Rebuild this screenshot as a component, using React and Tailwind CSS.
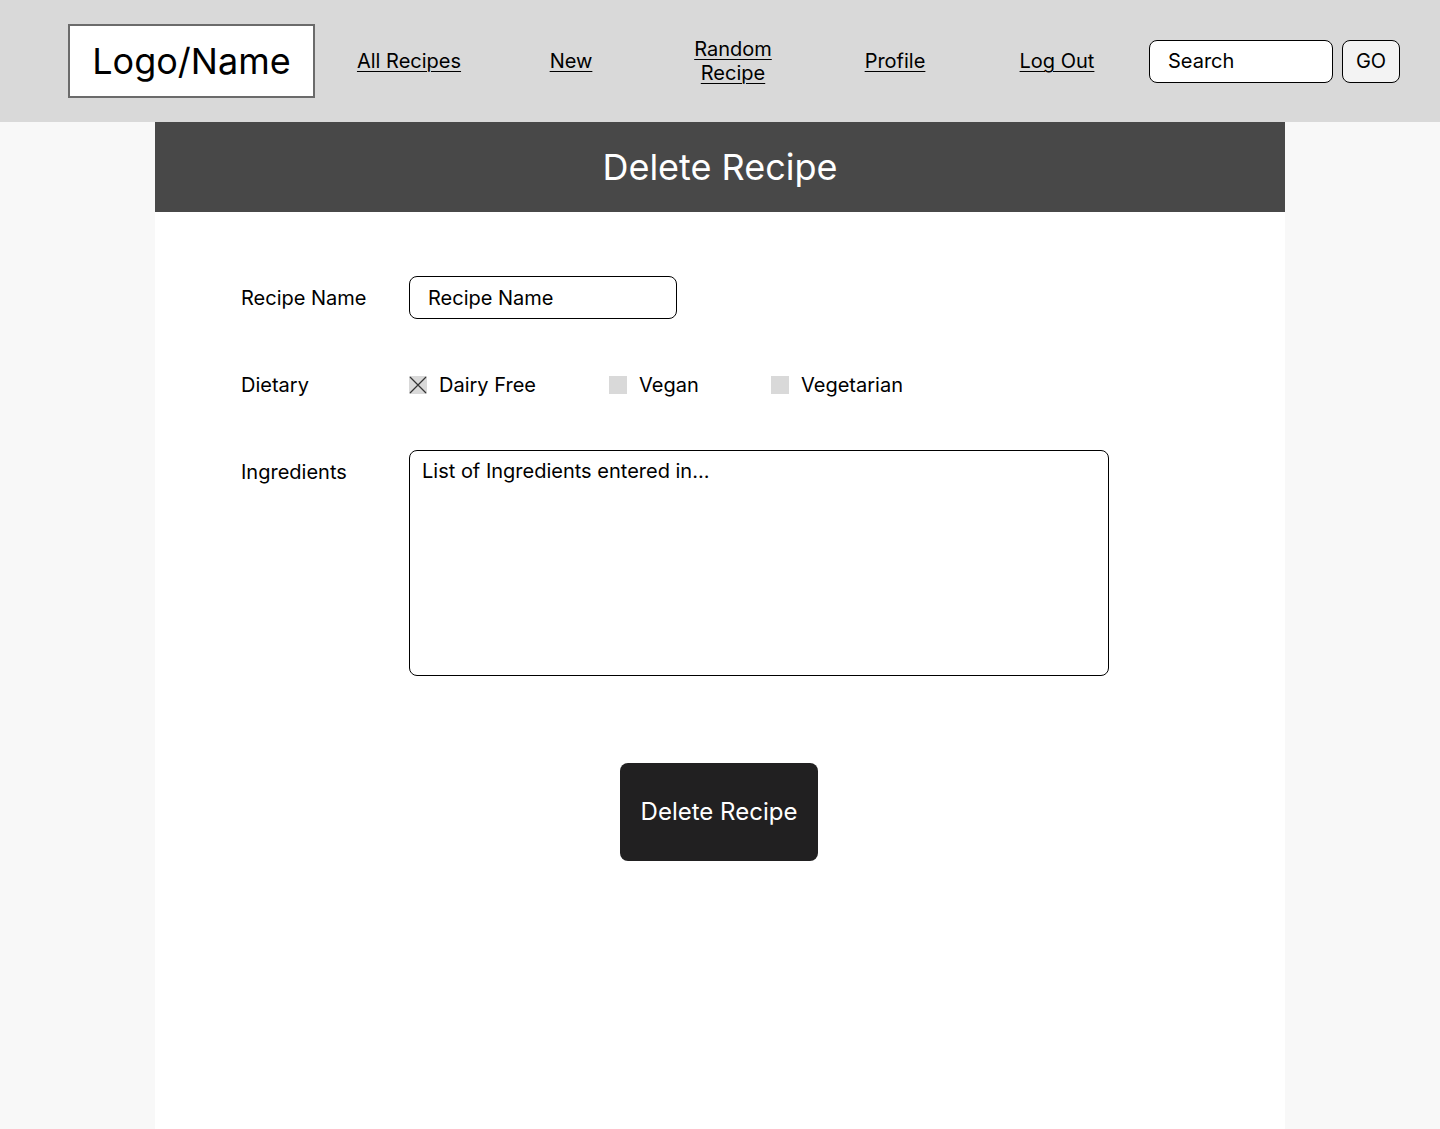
const navItems = [
  { label: 'All Recipes' },
  { label: 'New' },
  { label: 'Random Recipe', twoLine: true },
  { label: 'Profile' },
  { label: 'Log Out' },
];

function Checkbox({ checked, label, width }) {
  return (
    <div className="flex items-center" style={{ width }}>
      <span className="w-[18px] h-[18px] bg-[#d9d9d9] flex items-center justify-center shrink-0">
        {checked && (
          <svg width="18" height="18" viewBox="0 0 18 18">
            <path d="M1 1 L17 17 M17 1 L1 17" stroke="#333" strokeWidth="1.2" />
          </svg>
        )}
      </span>
      <span className="ml-3 text-[20px]">{label}</span>
    </div>
  );
}

export default function App() {
  return (
    <div className="min-h-[1129px] bg-[#f8f8f8] text-black font-['Inter','Liberation_Sans',sans-serif] flex flex-col">

      {/* Topbar */}
      <header className="h-[122px] bg-[#d9d9d9] flex items-center pl-[68px] shrink-0">
        <div className="w-[247px] h-[74px] bg-white border-2 border-[#6b6b6b] flex items-center justify-center text-[36px]">
          Logo/Name
        </div>
        <nav className="ml-[13px] flex items-center">
          {navItems.map((item) => (
            <a
              key={item.label}
              href="#"
              className="w-[162px] text-center text-[20px] leading-[24px] underline underline-offset-[3px] decoration-1"
            >
              {item.twoLine ? (
                <>Random<br />Recipe</>
              ) : (
                item.label
              )}
            </a>
          ))}
        </nav>
        <div className="ml-[11px] w-[184px] h-[43px] bg-white border border-black rounded-[8px] flex items-center pl-[18px] text-[20px]">
          Search
        </div>
        <button className="ml-[9px] w-[58px] h-[43px] bg-[#f3f3f3] border border-black rounded-[8px] text-[20px]">
          GO
        </button>
      </header>

      {/* Panel */}
      <main className="flex-1 w-[1130px] ml-[155px] bg-white flex flex-col">
        <div className="h-[90px] bg-[#484848] text-white text-[36px] flex items-center justify-center">
          Delete Recipe
        </div>

        <div className="pl-[86px] pt-[64px] flex flex-col">
          <div className="flex items-center h-[43px]">
            <span className="w-[168px] text-[20px]">Recipe Name</span>
            <div className="w-[268px] h-[43px] border border-black rounded-[8px] flex items-center pl-[18px] text-[20px]">
              Recipe Name
            </div>
          </div>

          <div className="flex items-center h-[42px] mt-[45px]">
            <span className="w-[168px] text-[20px]">Dietary</span>
            <Checkbox checked label="Dairy Free" width={200} />
            <Checkbox label="Vegan" width={162} />
            <Checkbox label="Vegetarian" width={200} />
          </div>

          <div className="flex mt-[44px]">
            <span className="w-[168px] text-[20px] leading-[24px] pt-[10px]">Ingredients</span>
            <div className="w-[700px] h-[226px] border border-black rounded-[8px] px-[12px] pt-[8px] text-[20px] leading-[24px]">
              List of Ingredients entered in...
            </div>
          </div>
        </div>

        <div className="flex justify-center mt-[87px] pr-[2px]">
          <button className="w-[198px] h-[98px] bg-[#212021] text-white text-[24px] rounded-[8px]">
            Delete Recipe
          </button>
        </div>
      </main>
    </div>
  );
}
